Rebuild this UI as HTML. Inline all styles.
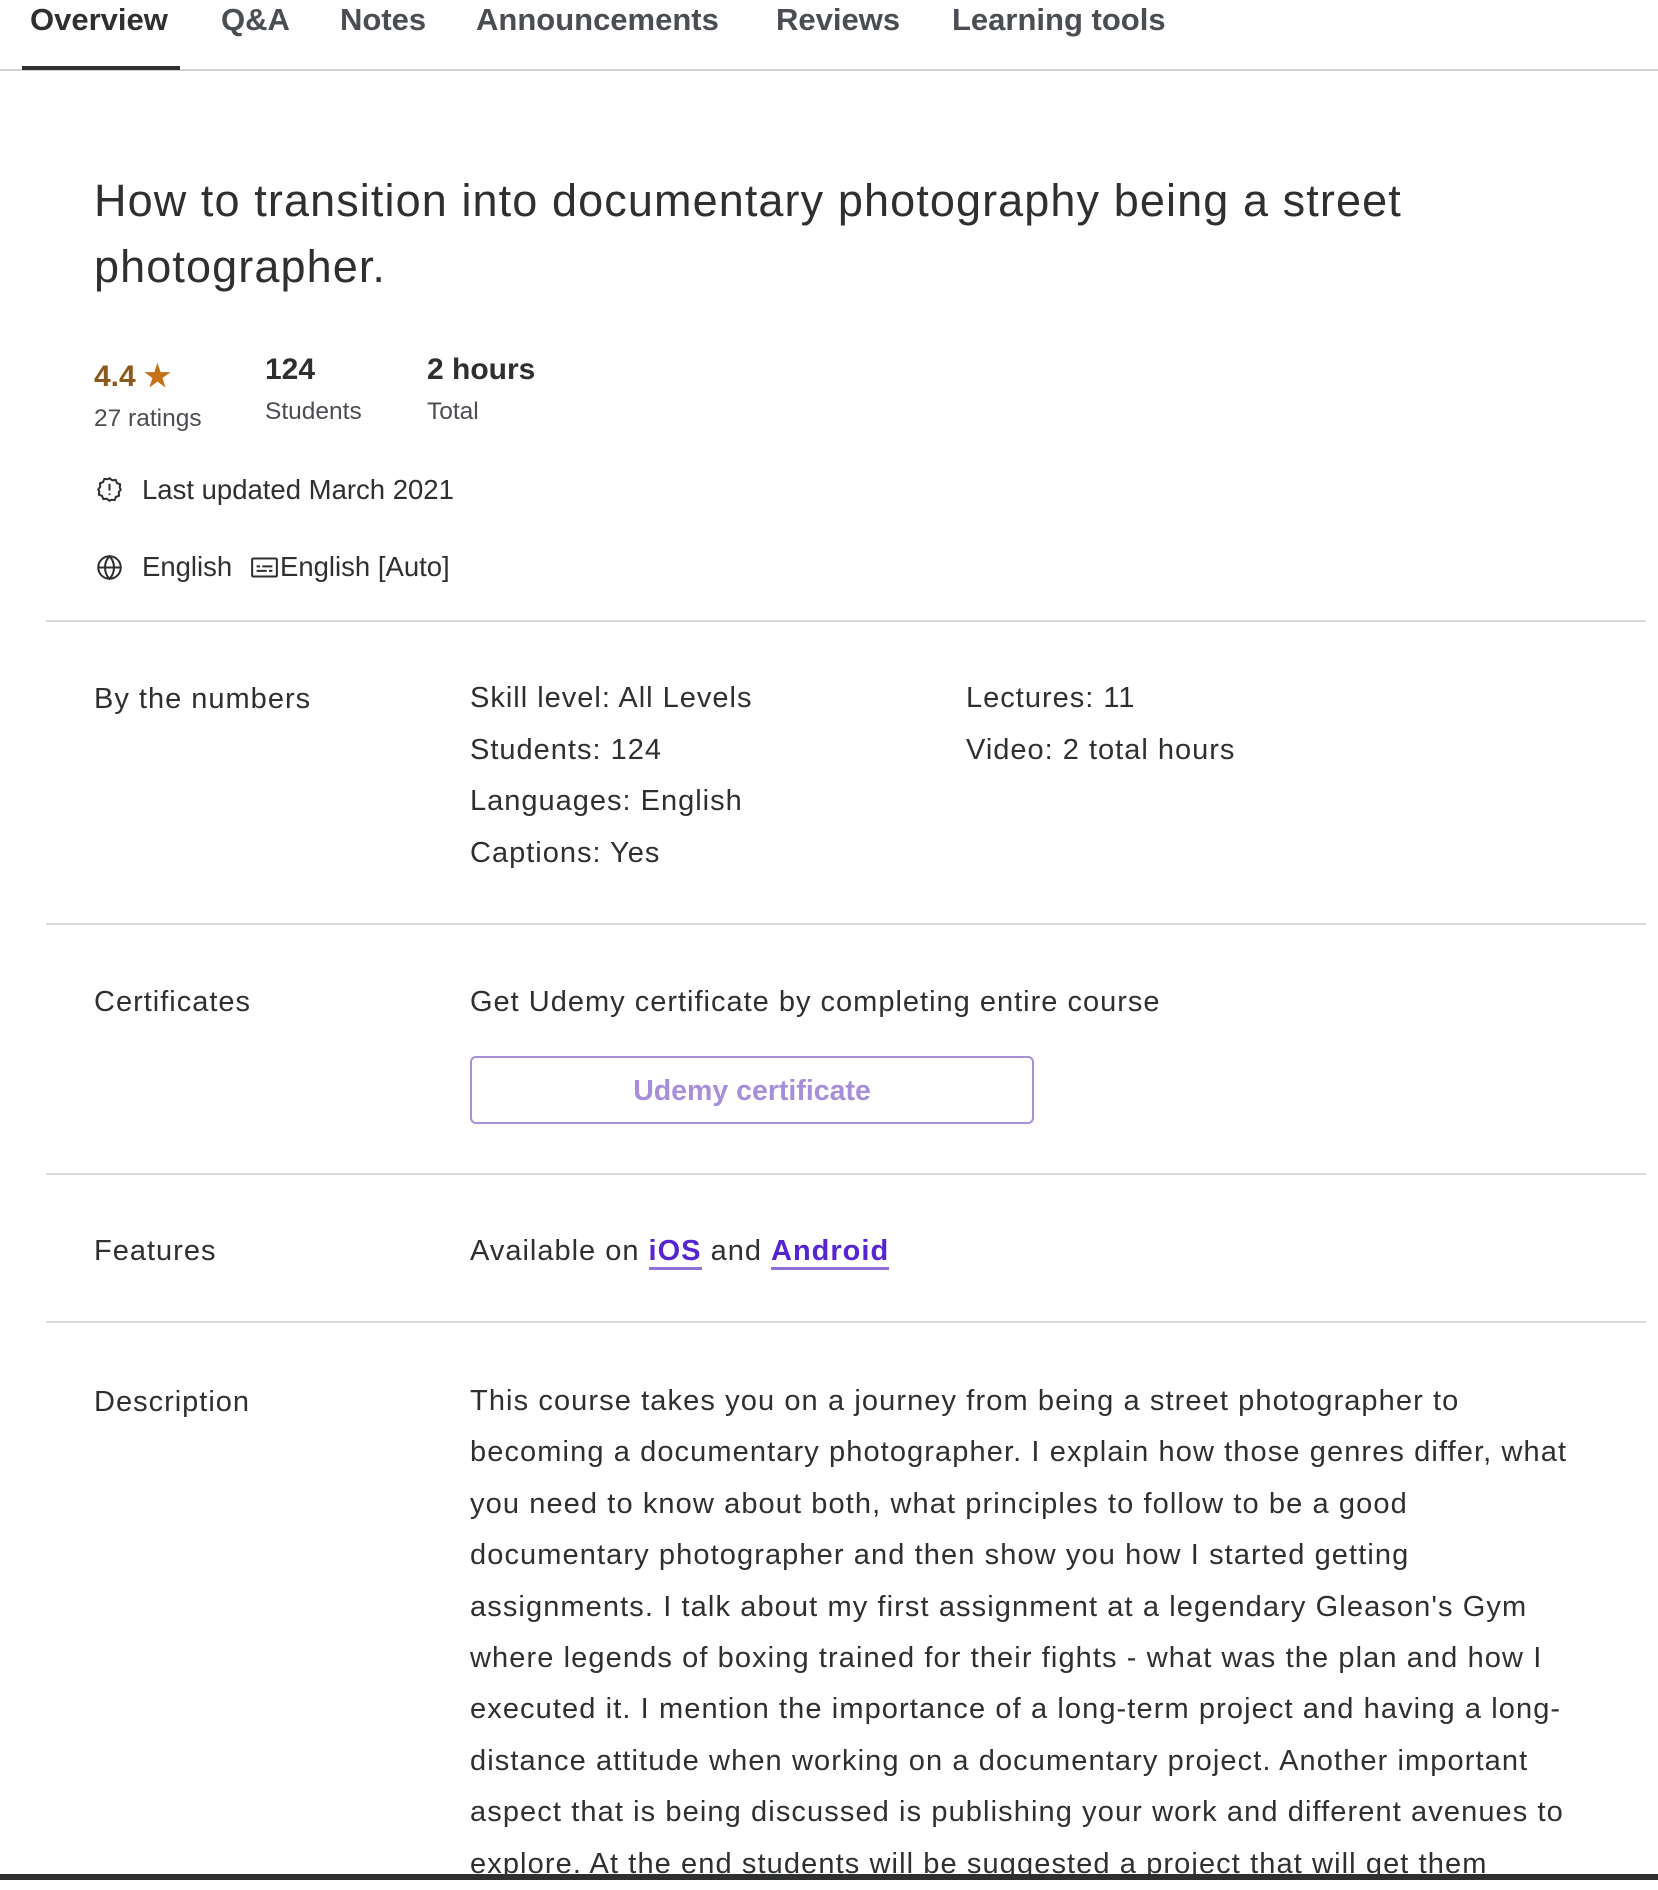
<!DOCTYPE html>
<html><head><meta charset="utf-8"><style>
body{margin:0;width:1658px;height:1880px;background:#fff;position:relative;overflow:hidden;font-family:"Liberation Sans",sans-serif;color:#2d2f31}
.a{position:absolute;white-space:nowrap}
.tab{top:0;font-size:31px;font-weight:bold;color:#4a4d52;line-height:40px}
.hr{position:absolute;left:46px;width:1600px;height:2px;background:#d9dadc}
.t{font-size:29px;letter-spacing:1px;line-height:52px}
.m{font-size:27.5px;line-height:52px}
.d{font-size:29px;letter-spacing:1.1px;line-height:51.4px}
a{color:#5624d0;font-weight:bold;text-decoration:none;border-bottom:3px solid #8f6fd8}
</style></head><body>
<div class="a tab" style="left:30px;color:#2d2f31">Overview</div>
<div class="a tab" style="left:221px">Q&amp;A</div>
<div class="a tab" style="left:340px">Notes</div>
<div class="a tab" style="left:476px">Announcements</div>
<div class="a tab" style="left:776px">Reviews</div>
<div class="a tab" style="left:952px">Learning tools</div>
<div style="position:absolute;left:0;top:69px;width:1658px;height:2px;background:#d1d2d4"></div>
<div style="position:absolute;left:22px;top:66px;width:158px;height:4px;background:#2d2f31"></div>

<div class="a" style="left:94px;top:168px;font-size:45px;letter-spacing:1.1px;line-height:66px;color:#2d2f31">How to transition into documentary photography being a street<br>photographer.</div>

<div class="a" style="left:94px;top:359px;font-size:30px;font-weight:bold;color:#8b5a1e;line-height:36px">4.4 <span style="color:#c4711a;font-size:30px">★</span></div>
<div class="a" style="left:94px;top:405px;font-size:24.5px;color:#4a4d52;line-height:28px">27 ratings</div>
<div class="a" style="left:265px;top:352px;font-size:30px;font-weight:bold;line-height:36px">124</div>
<div class="a" style="left:265px;top:398px;font-size:24.5px;color:#4a4d52;line-height:28px">Students</div>
<div class="a" style="left:427px;top:352px;font-size:30px;font-weight:bold;line-height:36px">2 hours</div>
<div class="a" style="left:427px;top:398px;font-size:24.5px;color:#4a4d52;line-height:28px">Total</div>

<svg class="a" style="left:96px;top:476px" width="27" height="27" viewBox="0 0 24 24" fill="none" stroke="#2d2f31" stroke-width="1.8"><path d="M12 2l2.5 1.8 3-.3 1.1 2.8 2.8 1.1-.3 3L22 12l-1.8 2.5.3 3-2.8 1.1-1.1 2.8-3-.3L12 22l-2.5-1.8-3 .3-1.1-2.8-2.8-1.1.3-3L2 12l1.8-2.5-.3-3 2.8-1.1 1.1-2.8 3 .3z"/><path d="M12 7v6M12 15.5v1.5"/></svg>
<div class="a m" style="left:142px;top:464px">Last updated March 2021</div>
<svg class="a" style="left:96px;top:554px" width="27" height="27" viewBox="0 0 24 24" fill="none" stroke="#2d2f31" stroke-width="1.8"><circle cx="12" cy="12" r="10"/><path d="M2 12h20M12 2c3 3 4 6.5 4 10s-1 7-4 10c-3-3-4-6.5-4-10s1-7 4-10z"/></svg>
<div class="a m" style="left:142px;top:541px">English</div>
<svg class="a" style="left:251px;top:556px" width="27" height="23" viewBox="0 0 24 20" fill="none" stroke="#2d2f31" stroke-width="1.8"><rect x="1" y="2" width="22" height="16" rx="1"/><path d="M5 9h3M10 9h9M5 13h9M16 13h3"/></svg>
<div class="a m" style="left:280px;top:541px">English [Auto]</div>

<div class="hr" style="top:620px"></div>
<div class="a t" style="left:94px;top:673px">By the numbers</div>
<div class="a t" style="left:470px;top:673px;line-height:51.5px">Skill level: All Levels<br>Students: 124<br>Languages: English<br>Captions: Yes</div>
<div class="a t" style="left:966px;top:673px;line-height:51.5px">Lectures: 11<br>Video: 2 total hours</div>

<div class="hr" style="top:923px"></div>
<div class="a t" style="left:94px;top:976px">Certificates</div>
<div class="a t" style="left:470px;top:976px">Get Udemy certificate by completing entire course</div>
<div style="position:absolute;left:470px;top:1056px;width:560px;height:64px;border:2px solid #a990d4;border-radius:6px;text-align:center;line-height:66px;font-size:28.5px;font-weight:bold;color:#a68fd8">Udemy certificate</div>

<div class="hr" style="top:1173px"></div>
<div class="a t" style="left:94px;top:1225px">Features</div>
<div class="a t" style="left:470px;top:1225px">Available on <a>iOS</a> and <a>Android</a></div>

<div class="hr" style="top:1321px"></div>
<div class="a t" style="left:94px;top:1376px">Description</div>
<div class="a d" style="left:470px;top:1376px">This course takes you on a journey from being a street photographer to<br>becoming a documentary photographer. I explain how those genres differ, what<br>you need to know about both, what principles to follow to be a good<br>documentary photographer and then show you how I started getting<br>assignments. I talk about my first assignment at a legendary Gleason's Gym<br>where legends of boxing trained for their fights - what was the plan and how I<br>executed it. I mention the importance of a long-term project and having a long-<br>distance attitude when working on a documentary project. Another important<br>aspect that is being discussed is publishing your work and different avenues to<br>explore. At the end students will be suggested a project that will get them</div>

<div style="position:absolute;left:0;top:1874px;width:1658px;height:6px;background:#2d2f31"></div>
</body></html>
